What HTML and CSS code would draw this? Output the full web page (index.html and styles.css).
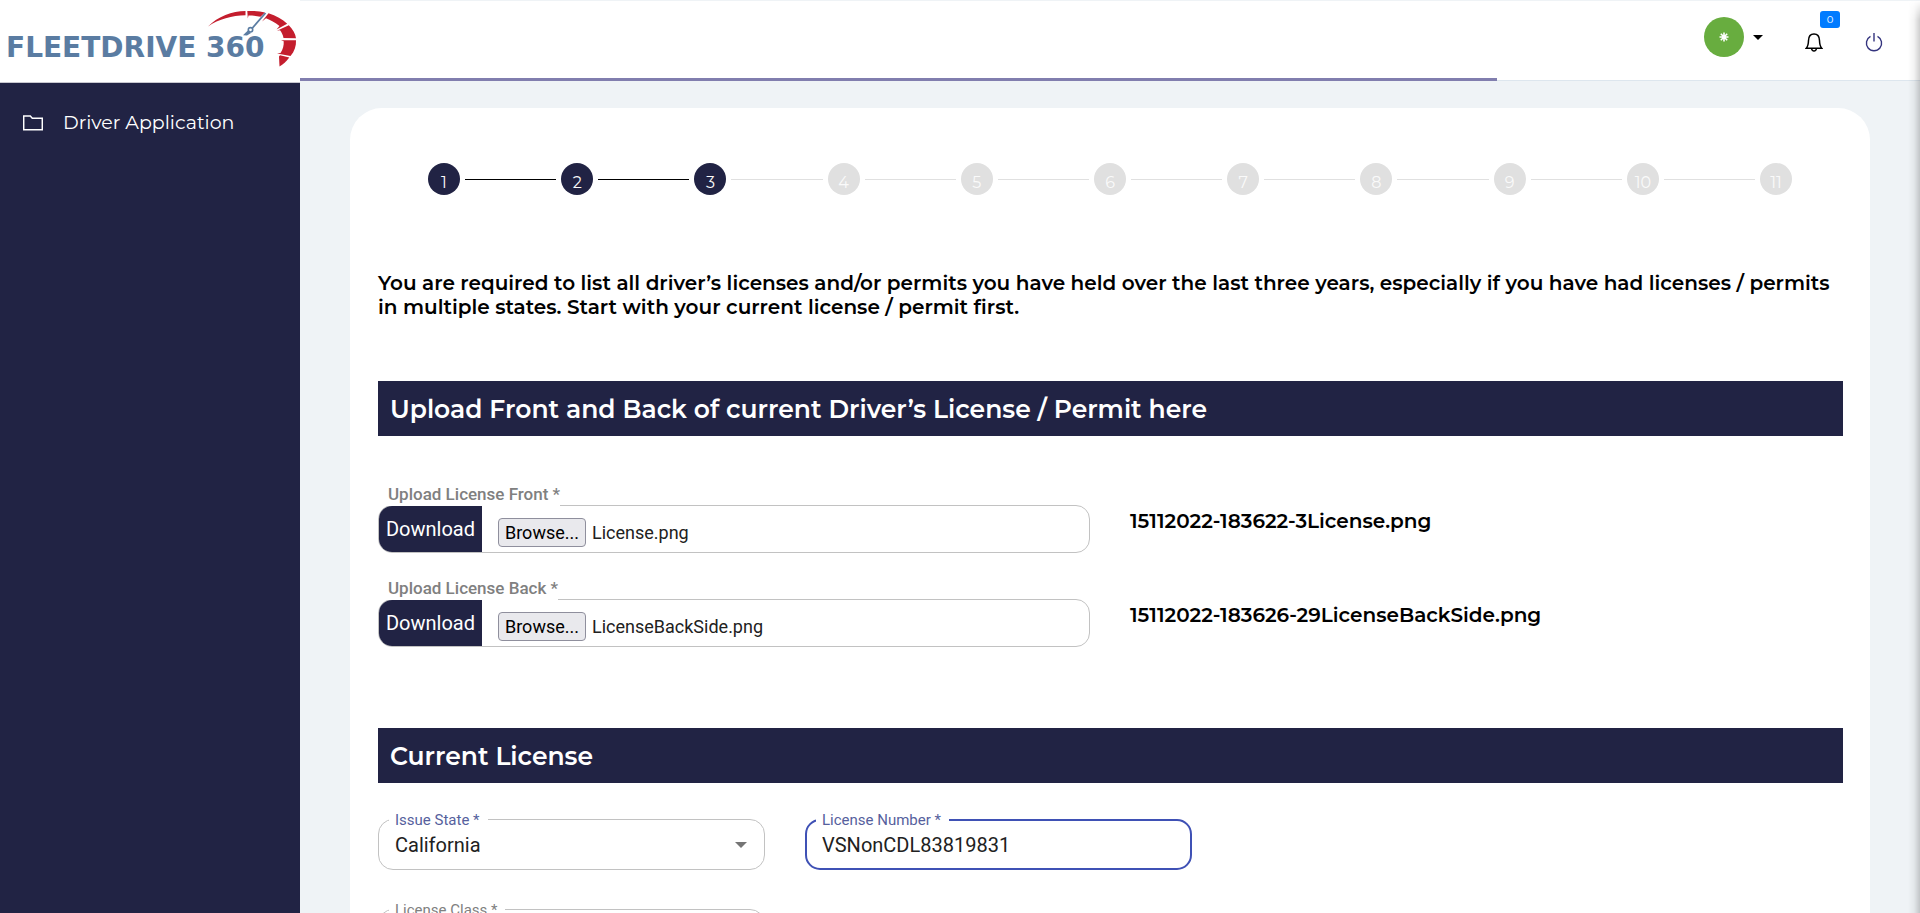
FILE: index.html
```html
<!DOCTYPE html>
<html lang="en">
<head>
<meta charset="utf-8">
<title>FleetDrive 360 - Driver Application</title>
<link rel="stylesheet" href="styles.css">
</head>
<body>
<div class="shell">
  <aside class="sidebar">
    <a class="logo" href="#" aria-label="FleetDrive 360">
      <svg class="logo-art" viewBox="0 0 300 82" aria-hidden="true">
        <text class="logo-text" x="6" y="57">FLEETDRIVE 360</text>
        <path fill="#c41e2e" d="M208 26.500C218 16.500 232 11.300 245.500 11.100L245.500 15.300C232 15.600 219 19 208 26.500Z"/>
        <path fill="#c41e2e" d="M247.300 11C254 10.700 260 11.300 265 12.500L260.500 16.800C256 15.800 252 15.500 248.500 15.500L247.800 18.500Z"/>
        <path fill="#c41e2e" d="M268.500 13.200C276 15.500 282.500 19.200 287.200 23.800L276.500 29.500L279.500 26C275 22.500 270.500 19.800 266 18.200L262 21.500Z"/>
        <path fill="#c41e2e" d="M288.800 25.200C293 29.500 295.500 34 296 38.300L283.500 38C283 35 281.500 32 280 30.200L277 30.800Z"/>
        <path fill="#c41e2e" d="M296 40.300C296.300 46 294.500 51.500 290.500 56L277 53.500L280.500 53C283 49.500 284 45 283.700 41.200L281 40.200Z"/>
        <path fill="#c41e2e" d="M289.300 57.500C286.500 61.500 283 64.500 279.500 66.500L279 56.500L280 55.300Z"/>
        <path fill="none" stroke="#5a7ca2" stroke-width="1.800" d="M265.500 13L252 28.500"/>
        <circle cx="250.500" cy="29.800" r="2.200" fill="#fff" stroke="#5a7ca2" stroke-width="1.600"/>
        <path fill="#5a7ca2" d="M247.800 30.500L251 33L247 35.500L243 35.200Z"/>
      </svg>
    </a>
    <nav class="nav">
      <a class="nav-link" href="#">
        <svg width="20" height="16" viewBox="0 0 20 16" fill="none" stroke="currentColor" stroke-width="1.500" aria-hidden="true"><path d="M.7 1h6.600l2 2.200h10v11.600H.7z"/></svg>
        <span>Driver Application</span>
      </a>
    </nav>
  </aside>

  <div class="page">
    <header class="topbar">
      <button class="user" aria-label="Account menu">
        <span class="avatar"><svg width="10" height="10" viewBox="0 0 10 10" stroke="#fff" stroke-width="1.600" aria-hidden="true"><path d="M5 .5v9M.5 5h9M1.800 1.800l6.400 6.400M8.200 1.800l-6.400 6.400"/></svg></span>
        <svg width="10" height="5" viewBox="0 0 10 5" aria-hidden="true"><path d="M0 0h10L5 5z"/></svg>
      </button>
      <button class="bell" aria-label="Notifications">
        <svg width="18" height="19" viewBox="0 0 18 19" fill="none" stroke="#000" stroke-width="1.500" aria-hidden="true"><path d="M1.300 15.200C3.300 13 3.400 11 3.500 7.500C3.600 3.500 5.700 1 9 1s5.400 2.500 5.500 6.500c.1 3.500.2 5.500 2.200 7.700zM6.600 15.500c.2 1.600 1.200 2.500 2.400 2.500s2.200-.9 2.400-2.500"/></svg>
        <span class="badge">0</span>
      </button>
      <button class="power" aria-label="Log out">
        <svg width="18" height="19" viewBox="0 0 18 19" fill="none" stroke="#34347e" stroke-width="1.400" aria-hidden="true"><path d="M9 0v8.500M5.500 3.400a7.600 7.600 0 1 0 7 0"/></svg>
      </button>
      <div class="progress"></div>
    </header>

    <main class="content">
      <section class="card">
        <ol class="steps">
          <li class="step done"><span>1</span></li>
          <li class="step done"><span>2</span></li>
          <li class="step done"><span>3</span></li>
          <li class="step"><span>4</span></li>
          <li class="step"><span>5</span></li>
          <li class="step"><span>6</span></li>
          <li class="step"><span>7</span></li>
          <li class="step"><span>8</span></li>
          <li class="step"><span>9</span></li>
          <li class="step"><span>10</span></li>
          <li class="step"><span>11</span></li>
        </ol>

        <p class="intro">You are required to list all driver’s licenses and/or permits you have held over the last three years, especially if you have had licenses / permits in multiple states. Start with your current license / permit first.</p>

        <h2 class="band">Upload Front and Back of current Driver’s License / Permit here</h2>

        <div class="uploads">
          <div class="upload-row">
            <div class="upload">
              <label class="upload-label" for="front">Upload License Front *</label>
              <div class="upload-box">
                <button class="download">Download</button>
                <input class="file-input" id="front" type="file">
                <label class="browse" for="front">Browse...</label>
                <span class="file-name">License.png</span>
              </div>
            </div>
            <p class="stored">15112022-183622-3License.png</p>
          </div>
          <div class="upload-row">
            <div class="upload">
              <label class="upload-label" for="back">Upload License Back *</label>
              <div class="upload-box">
                <button class="download">Download</button>
                <input class="file-input" id="back" type="file">
                <label class="browse" for="back">Browse...</label>
                <span class="file-name">LicenseBackSide.png</span>
              </div>
            </div>
            <p class="stored">15112022-183626-29LicenseBackSide.png</p>
          </div>
        </div>

        <h2 class="band">Current License</h2>

        <form class="fields">
          <div class="field">
            <label class="field-label" for="state">Issue State *</label>
            <select class="control" id="state"><option>California</option></select>
            <svg class="arrow" width="12" height="6" viewBox="0 0 12 6" aria-hidden="true"><path d="M0 0h12L6 6z"/></svg>
          </div>
          <div class="field focused">
            <label class="field-label" for="number">License Number *</label>
            <input class="control" id="number" type="text" value="VSNonCDL83819831">
          </div>
          <div class="field muted">
            <label class="field-label" for="class">License Class *</label>
            <select class="control" id="class"><option></option></select>
          </div>
        </form>
      </section>
    </main>
  </div>
</div>
</body>
</html>
```
FILE: styles.css
```css
* { box-sizing: border-box; }

body {
  margin: 0;
  background: #eff3f6;
  color: #000;
  font-family: Montserrat, Inter, sans-serif;
}

button {
  border: 0;
  padding: 0;
  background: none;
  font: inherit;
}

.shell {
  display: flex;
  height: 100vh;
  overflow: hidden;
}

.sidebar {
  flex: 0 0 300px;
  background: #212344;
}

.logo {
  display: block;
  height: 83px;
  background: #fff;
  border-bottom: 1px solid #c8c8d0;
}

.logo-art { display: block; width: 100%; }

.logo-text {
  fill: #5a7ca2;
  font: bold 28px "DejaVu Sans", sans-serif;
}

.nav { padding: 24px 23px; }

.nav-link {
  display: flex;
  align-items: center;
  gap: 20px;
  color: #fff;
  font-size: 19px;
  line-height: 32px;
  text-decoration: none;
}

.page {
  flex: 1;
  min-width: 0;
  display: flex;
  flex-direction: column;
}

.page::after {
  content: "";
  position: fixed;
  top: 0;
  right: 0;
  bottom: 0;
  width: 12px;
  background: linear-gradient(to left, #00000030, #0000000c 50%, #00000000);
  mask-image: linear-gradient(to bottom, #0000, #000 20px);
}

.topbar {
  position: relative;
  flex: 0 0 81px;
  display: flex;
  justify-content: flex-end;
  background: #fff;
  border-top: 1px solid #eff3f6;
  border-bottom: 1px solid #dde6ee;
  padding: 16px 37px 0 0;
}

.user {
  display: flex;
  align-items: center;
  align-self: flex-start;
  gap: 9px;
  margin-right: 42px;
}

.avatar {
  display: grid;
  place-items: center;
  width: 40px;
  height: 40px;
  border-radius: 50%;
  background: #68ad3f;
}

.bell {
  position: relative;
  align-self: flex-start;
  height: 19px;
  margin: 16px 42px 0 0;
}

.power {
  align-self: flex-start;
  height: 19px;
  margin-top: 16px;
}

.bell svg, .power svg { display: block; }

.badge {
  position: absolute;
  left: 15px;
  bottom: 24px;
  width: 20px;
  border-radius: 3px;
  background: #007bff;
  color: #fff;
  font-size: 10px;
  line-height: 17px;
  text-align: center;
}

.progress {
  position: absolute;
  left: 0;
  bottom: -1px;
  width: 73.9%;
  height: 3px;
  background: #817eae;
}

.content {
  flex: 1;
  min-height: 0;
  overflow: hidden;
  padding: 27px 50px 0;
}

.card {
  min-height: 100%;
  padding: 55px 27px 40px 28px;
  border-radius: 32px 32px 0 0;
  background: #fff;
}

.steps {
  display: flex;
  gap: 5px;
  margin: 0;
  padding: 0 51px 0 50px;
  list-style: none;
}

.step {
  display: flex;
  align-items: center;
  gap: 5px;
  flex: 1;
}

.step span {
  width: 32px;
  height: 32px;
  padding-top: 4px;
  border-radius: 50%;
  background: #e0e0e0;
  color: #fafafa;
  font-size: 16px;
  line-height: 32px;
  text-align: center;
}

.step::after {
  content: "";
  flex: 1;
  height: 1px;
  background: #e0e0e0;
}

.step:last-child { flex: none; }
.step:last-child::after { display: none; }
.step.done span { background: #212344; }
.step.done:not(:nth-child(3))::after { background: #000; }

.intro {
  margin: 76px 0 62px;
  font-size: 20px;
  font-weight: 600;
  line-height: 24px;
}

.band {
  margin: 0;
  padding: 2px 12px 0;
  background: #212344;
  color: #fff;
  font-size: 25px;
  font-weight: 600;
  line-height: 53px;
}

.uploads {
  display: grid;
  gap: 22px;
  padding: 45px 0 81px;
}

.upload-row {
  display: grid;
  grid-template-columns: 712px 1fr;
  gap: 40px;
}

.upload { font-family: Roboto, sans-serif; }

/* The label's white ground opens a notch in the box's top border. */
.upload-label {
  display: block;
  position: relative;
  z-index: 1;
  width: fit-content;
  margin-bottom: -1px;
  padding: 2px 0 1px 10px;
  background: #fff;
  color: #808080;
  font-size: 17px;
  font-weight: 500;
  line-height: 22px;
}

.upload-box {
  display: flex;
  align-items: center;
  height: 48px;
  overflow: hidden;
  border: 1px solid #c2c2c2;
  border-radius: 14px;
  font-size: 18px;
  color: #212121;
}

.download {
  align-self: stretch;
  width: 103px;
  margin-right: 16px;
  background: #212344;
  color: #fff;
  font-size: 20px;
}

.file-input {
  position: absolute;
  opacity: 0;
  pointer-events: none;
}

.browse {
  width: 88px;
  margin: 6px 6px 0 0;
  border: 1px solid #8f8f9d;
  border-radius: 4px;
  background: #e9e9ed;
  color: #000;
  line-height: 27px;
  text-align: center;
}

.file-name { padding-top: 6px; }

.stored {
  margin: 0;
  padding-top: 28px;
  font-size: 20px;
  font-weight: 600;
  line-height: 24px;
}

.fields {
  display: grid;
  grid-template-columns: 387px 387px;
  gap: 39px 40px;
  padding-top: 36px;
  font-family: Roboto, sans-serif;
}

.field { position: relative; }

.field-label {
  position: absolute;
  top: -8px;
  left: 11px;
  padding: 0 8px 0 6px;
  background: #fff;
  color: #565f9d;
  font-size: 15px;
  line-height: 18px;
}

.control {
  display: block;
  width: 100%;
  height: 51px;
  padding: 0 16px;
  border: 1px solid #c2c2c2;
  border-radius: 15px;
  appearance: none;
  background: #fff;
  color: #212121;
  font: 20px Roboto, sans-serif;
  outline: 0;
}

.focused .control {
  padding: 0 15px;
  border: 2px solid #3f51b5;
}

.muted .field-label { color: #808080; }

.arrow {
  position: absolute;
  top: 23px;
  right: 18px;
  fill: #757575;
}
```
